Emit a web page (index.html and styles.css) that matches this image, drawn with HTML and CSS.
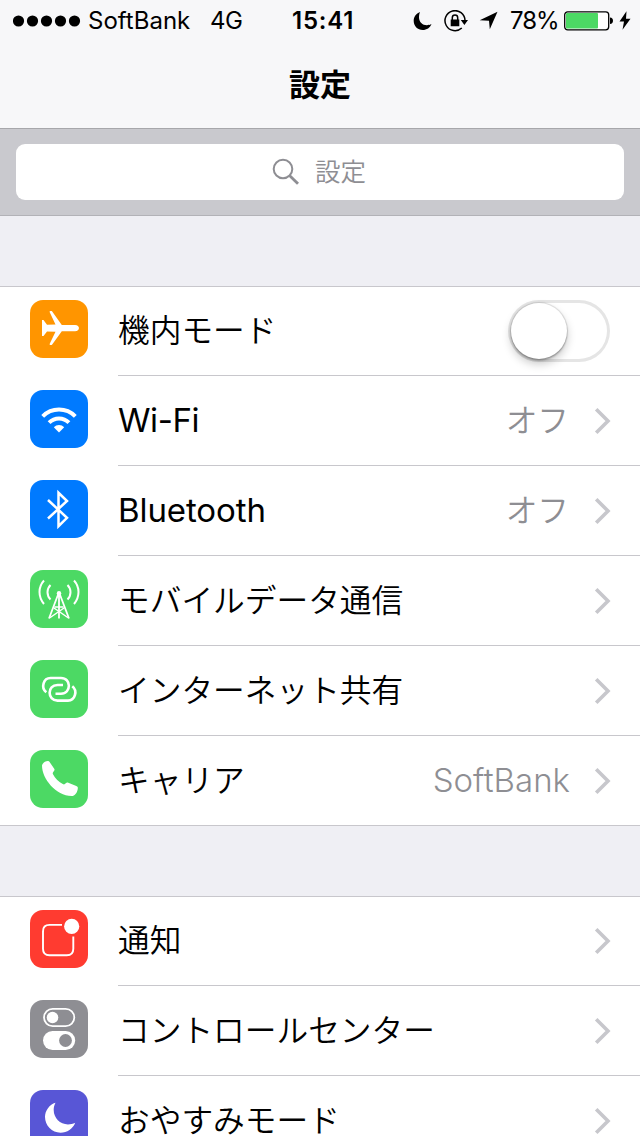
FILE: index.html
```html
<!DOCTYPE html>
<html lang="ja">
<head>
<meta charset="utf-8">
<title>設定</title>
<link rel="stylesheet" href="styles.css">
</head>
<body>
<svg class="defs" width="0" height="0">
  <symbol id="chevron" viewBox="0 0 18 28"><path d="M2.200 2.200 14 14 2.200 25.800" fill="none" stroke="#c7c7cc" stroke-width="3.600"/></symbol>
</svg>
<header class="header">
  <div class="status">
    <div class="status-left">
      <svg class="signal" width="68" height="12" viewBox="0 0 68 12"><circle cx="5.500" cy="6" r="5.600"/><circle cx="19.500" cy="6" r="5.600"/><circle cx="33.500" cy="6" r="5.600"/><circle cx="47.500" cy="6" r="5.600"/><circle cx="61.500" cy="6" r="5.600"/></svg>
      <span class="operator">SoftBank</span>
      <span class="network">4G</span>
    </div>
    <span class="time">15:41</span>
    <div class="status-right">
      <svg width="19" height="20" viewBox="0 0 19 20"><path d="M7 1C3 2.500 .7 6 .7 10c0 5 4 9 9 9 4 0 7.500-2.300 8.800-6-1.300.8-3 1.200-4.700 1.200C9.500 14.200 6 11 6 6.500 6 4.300 6.300 2.500 7 1Z"/></svg>
      <svg class="lock" width="24" height="22" viewBox="0 0 24 22"><path d="M17.800 18A10 10 0 1 1 21 10.500" fill="none" stroke="#000" stroke-width="1.500"/><path d="M16.800 10H24l-3.600 5ZM6.700 9.500h8.600v6.700H6.700Z"/><path d="M8.300 10V7.700a2.700 2.700 0 0 1 5.400 0V10" fill="none" stroke="#000" stroke-width="1.500"/></svg>
      <svg class="location" width="19" height="19" viewBox="0 0 19 19"><path d="M18.500.7 10.800 18.300 10 9.700.7 9.200Z"/></svg>
      <span class="percent">78%</span>
      <svg class="battery" width="50" height="20" viewBox="0 0 50 20"><rect x=".7" y=".8" width="44" height="18" rx="3" fill="#fff" stroke="#000" stroke-width="1.300"/><rect x="2" y="2.100" width="32" height="15.400" rx="1" fill="#4cd964"/><path d="M46 6.500c4 0 4 6.500 0 6.500Z"/></svg>
      <svg class="bolt" width="12" height="20" viewBox="0 0 12 20"><path d="M7.500.3.500 10.500H5L3.500 18.700 11.500 7.800H7Z"/></svg>
    </div>
  </div>
  <h1 class="title">設定</h1>
</header>
<div class="search">
  <div class="field">
    <svg width="28" height="28" viewBox="0 0 28 28"><circle cx="11" cy="11" r="9.300" fill="none" stroke="#8e8e93" stroke-width="2"/><path d="m17.500 17.500 8.500 8.300" stroke="#8e8e93" stroke-width="2.800"/></svg>
    <span class="placeholder">設定</span>
  </div>
</div>
<main>
  <section class="group">
    <div class="row">
      <svg class="icon orange" viewBox="0 0 58 58"><path d="M12 20h1.500l3.500 4.700 8.500-.2L19.600 12c-.3-1 2-1.300 2.600-.5L31.800 25H45c5.300.2 5.300 6 0 6.200H31.800L22.200 44.500c-.6.900-2.900.6-2.600-.5L25.500 31.700l-8.500-.2L13.500 36H12Z"/></svg>
      <div class="body"><span class="label">機内モード</span><span class="toggle"><span class="knob"></span></span></div>
    </div>
    <div class="row">
      <svg class="icon blue" viewBox="0 0 58 58"><g fill="none" stroke="#fff" stroke-width="4"><path d="M12.700 26.300a23 23 0 0 1 32.600 0M19.100 32.700a14 14 0 0 1 19.800 0"/></g><path d="M23.800 37.200a7.500 7.500 0 0 1 10.400 0L29 42.500Z"/></svg>
      <div class="body"><span class="label latin wifi">Wi-Fi</span><span class="value">オフ</span><svg class="chevron"><use href="#chevron"/></svg></div>
    </div>
    <div class="row">
      <svg class="icon blue" viewBox="0 0 58 58"><path d="m18 20 19 17.800-8.500 8.400V12.800L37 21 18 38.500" fill="none" stroke="#fff" stroke-width="2.500"/></svg>
      <div class="body"><span class="label latin bluetooth">Bluetooth</span><span class="value">オフ</span><svg class="chevron"><use href="#chevron"/></svg></div>
    </div>
    <div class="row">
      <svg class="icon green" viewBox="0 0 58 58"><g fill="none" stroke="#fff" stroke-width="2"><path d="M14 10.500c-6 6.500-6 16.500 0 23.500M20.500 15c-4 4-4 10.500 0 14.500M44 10.500c6 6.500 6 16.500 0 23.500M37.500 15c4 4 4 10.500 0 14.500"/><path d="M28.300 24 19 48.500M29.700 24 39 48.500M29 22v26.500" stroke-width="1.800"/><path d="M24.500 37h9M24 38l14.500 10M34 38 19.500 48" stroke-width="1.500"/></g><circle cx="29" cy="23.300" r="2.200"/></svg>
      <div class="body"><span class="label">モバイルデータ通信</span><svg class="chevron"><use href="#chevron"/></svg></div>
    </div>
    <div class="row">
      <svg class="icon green" viewBox="0 0 58 58"><path d="M16.300 32.300C10.500 27.500 13.500 18 20.500 18H31c10.500 0 10.500 15.700 0 15.700h-5.500M42.300 26.300C48 31 45 40.600 38 40.600H27.500C17 40.600 17 25 27.500 25H33" fill="none" stroke="#fff" stroke-width="2.600"/></svg>
      <div class="body"><span class="label">インターネット共有</span><svg class="chevron"><use href="#chevron"/></svg></div>
    </div>
    <div class="row">
      <svg class="icon green" viewBox="0 0 58 58"><path d="M12 15.500c.5-2.500 3.500-4.500 6-4.400.8 0 1.200.4 1.600 1l4.600 6.600c.6 1 .4 1.600-.2 2.300-1.200 1.200-1.600 2-1 3.200 2 4 6 7.800 9.800 9.900 1.300.6 2 .3 3-.8.8-.8 1.300-1 2.500-.5l8 3.300c1.300.6 1.600 1.100 1.500 2.300-.3 3.900-3 7.700-6.200 7.700C26 45.500 12 29 12 15.500Z"/></svg>
      <div class="body"><span class="label">キャリア</span><span class="value latin carrier">SoftBank</span><svg class="chevron"><use href="#chevron"/></svg></div>
    </div>
  </section>
  <section class="group">
    <div class="row">
      <svg class="icon red" viewBox="0 0 58 58"><path d="M32 14.900H19.500q-6.500 0-6.500 6.500v17.300q0 6.500 6.500 6.500h17.300q6.500 0 6.500-6.500V26.500" fill="none" stroke="#fff" stroke-width="1.900"/><circle cx="41.700" cy="16.400" r="7.600"/></svg>
      <div class="body"><span class="label">通知</span><svg class="chevron"><use href="#chevron"/></svg></div>
    </div>
    <div class="row">
      <svg class="icon gray" viewBox="0 0 58 58"><rect x="14" y="8.900" width="30.300" height="17.300" rx="8.650" fill="none" stroke="#fff" stroke-width="1.800"/><circle cx="22.500" cy="17.500" r="5.800"/><rect x="13" y="31" width="32.200" height="19" rx="9.500"/><circle cx="35.500" cy="40.500" r="6.400" fill="#8e8e93"/></svg>
      <div class="body"><span class="label">コントロールセンター</span><svg class="chevron"><use href="#chevron"/></svg></div>
    </div>
    <div class="row">
      <svg class="icon purple" viewBox="0 0 58 58"><path d="M25.500 12.700C19.500 14.500 15 20.500 15 27c0 8.500 7 15.700 15.500 15.700 6.500 0 12.500-4 14.700-10-2.200 1-4.700 1.700-7.200 1.700-8 0-14.300-6.400-14.300-14.400 0-2.600.6-5.100 1.800-7.300Z"/></svg>
      <div class="body"><span class="label">おやすみモード</span><svg class="chevron"><use href="#chevron"/></svg></div>
    </div>
  </section>
</main>
</body>
</html>
```
FILE: styles.css
```css
* { box-sizing: border-box; }
html, body { margin: 0; height: 1136px; overflow: hidden; }
body { width: 640px; background: #efeff4; color: #000; font-family: "Noto Sans CJK JP", sans-serif; }
svg { display: block; flex: none; }
.defs { position: absolute; }

.header { height: 129px; background: #f7f7f9; border-bottom: 1px solid #a7a7ab; }
.status { height: 41px; display: grid; grid-template-columns: 292px 62px 1fr; align-items: center; font-family: Inter, sans-serif; font-size: 24px; line-height: 41px; white-space: nowrap; }
.status-left, .status-right { display: flex; align-items: center; }
.status-left { padding-left: 13px; }
.operator { width: 102px; margin-left: 7px; }
.network { margin-left: 20px; letter-spacing: -0.6px; }
.time { font-weight: 600; letter-spacing: 0.8px; }
.status-right { padding-left: 59px; }
.lock { margin-left: 12px; }
.location { margin-left: 11px; }
.percent { width: 48px; margin-left: 12px; letter-spacing: -1px; }
.battery { margin-left: 6px; }
.bolt { margin-left: 5px; }
.title { margin: 0; text-align: center; font-size: 31px; line-height: 83px; font-weight: 700; }

.search { height: 87px; padding: 15px 16px; background: #c9c9ce; border-bottom: 1px solid #b2b2b7; }
.field { height: 56px; padding-right: 2px; border-radius: 9px; background: #fff; display: flex; align-items: center; justify-content: center; gap: 15px; color: #8e8e93; font-size: 25.500px; font-weight: 350; line-height: 40px; }
.placeholder { padding-bottom: 4px; }

.group { margin-top: 70px; border-top: 1px solid #c8c7cc; background: #fff; }
.row { height: 90px; display: flex; padding-left: 30px; gap: 30px; }
.row:first-child { height: 89px; }
.row:first-child .icon { margin-top: 13px; }
.row:last-child { border-bottom: 1px solid #c8c7cc; }
.row:last-child .body { border-bottom: 0; }
.body { flex: 1; display: flex; align-items: center; padding-right: 28px; border-bottom: 1px solid #c8c7cc; }
.label, .value { padding-bottom: 6px; font-size: 31.700px; font-weight: 350; line-height: 40px; white-space: nowrap; }
.label { margin-right: auto; }
.value { color: #8e8e93; margin-right: 25px; }
.latin { padding-bottom: 2px; font-family: Inter, sans-serif; font-size: 33px; font-weight: 400; }
.wifi { letter-spacing: -0.4px; }
.bluetooth { letter-spacing: -0.1px; }
.carrier { margin-right: 24px; font-weight: 350; }
.chevron { width: 18px; height: 28px; }

.icon { width: 58px; height: 58px; margin-top: 14px; border-radius: 13px; fill: #fff; }
.orange { background: #ff9500; }
.blue { background: #007aff; }
.green { background: #4cd964; }
.red { background: #ff3b30; }
.gray { background: #8e8e93; }
.purple { background: #5856d6; }

.toggle { width: 102px; height: 62px; padding: 3px; margin-right: 2px; border-radius: 31px; box-shadow: inset 0 0 0 3px #e5e5e5; }
.knob { display: block; width: 56px; height: 56px; border-radius: 50%; background: #fff; box-shadow: 0 0 1px 1px rgba(0,0,0,.12), 0 5px 10px rgba(0,0,0,.22), 0 2px 2px rgba(0,0,0,.2); }
```
